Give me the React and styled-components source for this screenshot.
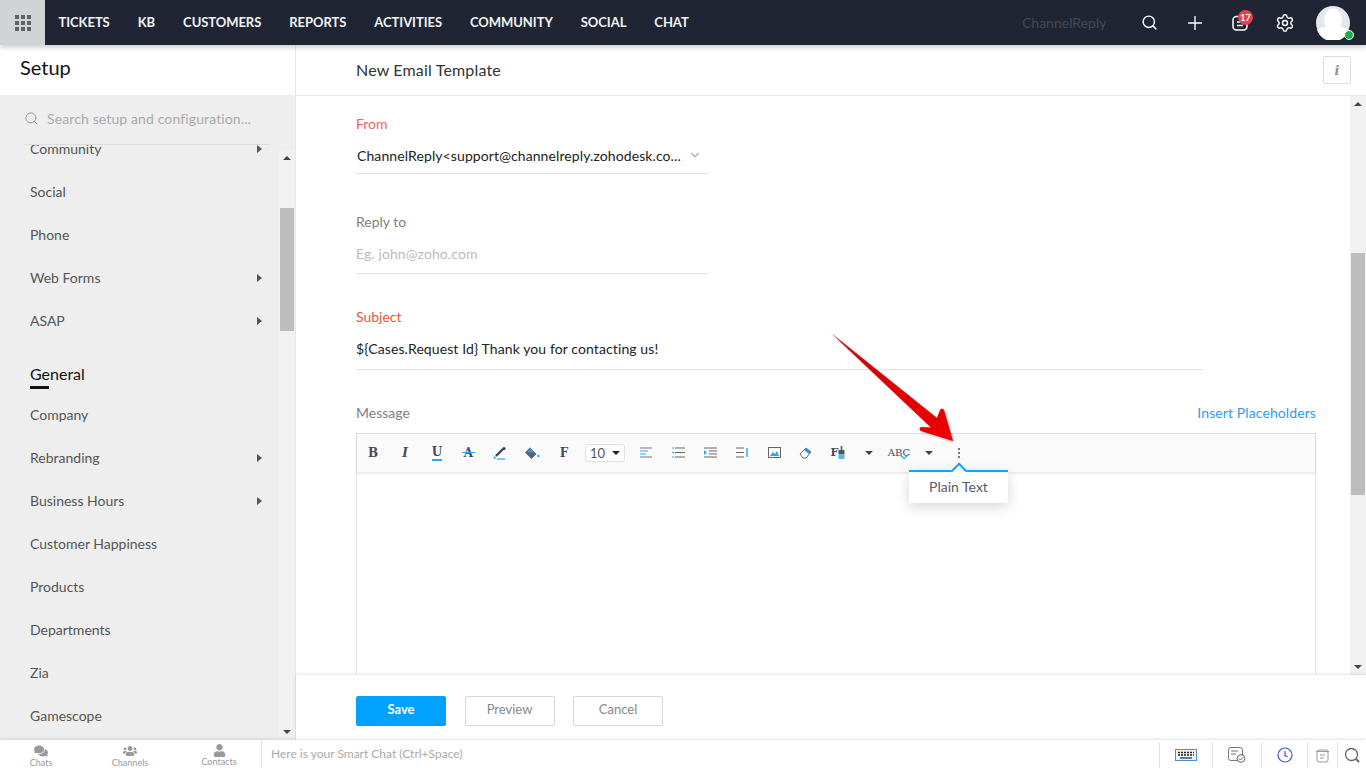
import React from "react";
import styled, { createGlobalStyle } from "styled-components";
import { Search, Plus, Settings, ChevronDown } from "lucide-react";
import { FaComments, FaUsers, FaUser } from "react-icons/fa";

const GlobalStyle = createGlobalStyle`
  html, body { margin: 0; height: 100%; overflow: hidden; }
  body { font-family: Lato, "Liberation Sans", sans-serif; color: #333; background: #fff; }
  * { box-sizing: border-box; }
`;

// top bar
const Page = styled.div`
  display: flex;
  flex-direction: column;
  height: 100vh;
`;

const TopBar = styled.header`
  position: relative;
  z-index: 3;
  flex: none;
  display: flex;
  align-items: center;
  height: 45px;
  background: #1f2533;
  box-shadow: 0 2px 6px rgba(0, 0, 0, 0.22);
`;

const AppsButton = styled.div`
  display: grid;
  grid-template-columns: repeat(3, 4px);
  grid-auto-rows: 4px;
  gap: 2px;
  align-content: center;
  justify-content: center;
  width: 45px;
  height: 45px;
  background: #d1d3d5;
`;

const AppsDot = styled.i`
  background: #5f6368;
`;

const Nav = styled.nav`
  display: flex;
  gap: 28px;
  margin-left: 13.5px;
  padding-bottom: 1px;
`;

const NavItem = styled.span`
  color: #f2f3f5;
  font-size: 13px;
  font-weight: 700;
  letter-spacing: -0.05px;
`;

const Brand = styled.span`
  margin-left: auto;
  width: 105px;
  color: #444a58;
  font-size: 14px;
`;

const TopIcons = styled.div`
  display: flex;
  align-items: center;
  margin-right: 16px;
`;

const TopIcon = styled.div`
  position: relative;
  display: flex;
  align-items: center;
  justify-content: center;
  width: 45px;
  color: #fff;
`;

const Badge = styled.span`
  position: absolute;
  top: -5px;
  left: 21px;
  min-width: 15px;
  height: 15px;
  border-radius: 50%;
  background: #e5414a;
  color: #fff;
  font-size: 9px;
  font-weight: 700;
  line-height: 15px;
  text-align: center;
`;

const Avatar = styled.div`
  position: relative;
  width: 34px;
  height: 34px;
  margin-left: 9px;
`;

const AvatarDot = styled.span`
  position: absolute;
  right: -4px;
  bottom: 0;
  width: 10px;
  height: 10px;
  border-radius: 50%;
  background: #22a94b;
  border: 1px solid #fff;
`;

// sidebar
const Body = styled.div`
  flex: 1;
  min-height: 0;
  display: flex;
`;

const Sidebar = styled.aside`
  flex: none;
  display: flex;
  flex-direction: column;
  width: 296px;
  border-right: 1px solid #e6e6e6;
`;

const SetupHead = styled.div`
  flex: none;
  height: 50px;
  padding: 9px 0 0 20px;
  background: #fff;
  color: #111;
  font-size: 20px;
  line-height: 26px;
`;

const SidePanel = styled.div`
  flex: 1;
  min-height: 0;
  display: flex;
  flex-direction: column;
  background: #eee;
`;

const SearchRow = styled.div`
  flex: none;
  display: flex;
  align-items: center;
  gap: 8px;
  height: 50px;
  margin: 0 25px 0 24px;
  padding-bottom: 2px;
  border-bottom: 1px solid #ddd;
  color: #aaa;
  font-size: 14px;
  letter-spacing: 0.12px;
`;

const SideScrollArea = styled.div`
  flex: 1;
  min-height: 0;
  display: flex;
`;

const SideList = styled.div`
  flex: 1;
  min-width: 0;
  overflow: hidden;
`;

const SideInner = styled.div`
  margin-top: -18.5px;
  padding: 0 17px 0 30px;
`;

const SideItem = styled.div`
  display: flex;
  align-items: center;
  justify-content: space-between;
  height: 43px;
  color: #555;
  font-size: 14px;
`;

const Caret = styled.span`
  width: 0;
  height: 0;
  margin-top: 1px;
  border-left: 5px solid #555;
  border-top: 4px solid transparent;
  border-bottom: 4px solid transparent;
`;

const SideHeading = styled.div`
  position: relative;
  margin-top: 21px;
  height: 30px;
  color: #111;
  font-size: 16px;
  line-height: 22px;
  &::after {
    content: "";
    position: absolute;
    left: 0;
    top: 23px;
    width: 19px;
    height: 3px;
    background: #111;
  }
`;

const ScrollBar = styled.div`
  flex: none;
  display: flex;
  flex-direction: column;
  align-items: center;
  width: 16px;
  margin-top: ${(p) => p.$offset || 0}px;
  background: #f1f1f1;
`;

const ScrollArrow = styled.span`
  flex: none;
  width: 0;
  height: 0;
  margin: ${(p) => (p.$down ? "auto 0 6px" : "6px 0 0")};
  border-left: 4px solid transparent;
  border-right: 4px solid transparent;
  border-${(p) => (p.$down ? "top" : "bottom")}: 4px solid #444;
`;

const ScrollThumb = styled.div`
  flex: none;
  width: 14px;
  height: ${(p) => p.$h}px;
  margin-top: ${(p) => p.$top}px;
  background: #bdbdbd;
`;

// main
const Main = styled.main`
  flex: 1;
  min-width: 0;
  display: flex;
  flex-direction: column;
`;

const MainHead = styled.div`
  flex: none;
  display: flex;
  align-items: center;
  justify-content: space-between;
  height: 51px;
  padding: 0 15px 0 60px;
  border-bottom: 1px solid #e6e6e6;
  color: #333;
  font-size: 16px;
  letter-spacing: 0.17px;
`;

const HeadTitle = styled.span`
  padding-bottom: 2px;
`;

const InfoButton = styled.div`
  display: flex;
  align-items: center;
  justify-content: center;
  width: 28px;
  height: 28px;
  border: 1px solid #ddd;
  border-radius: 2px;
  color: #8a8f98;
  font-family: "DejaVu Serif", serif;
  font-size: 13px;
  font-style: italic;
  font-weight: 700;
`;

const MainScroll = styled.div`
  flex: 1;
  min-height: 0;
  display: flex;
`;

const FormArea = styled.div`
  flex: 1;
  min-width: 0;
  overflow: hidden;
  padding: 18px 34px 0 60px;
`;

const Label = styled.div`
  color: ${(p) => p.$color || "#808080"};
  font-size: 14px;
  line-height: 20px;
`;

const Field = styled.div`
  display: flex;
  align-items: center;
  justify-content: space-between;
  width: ${(p) => p.$w}px;
  height: ${(p) => p.$h}px;
  margin-top: ${(p) => p.$mt}px;
  margin-bottom: ${(p) => p.$mb}px;
  padding: ${(p) => p.$pt || 0}px 6px ${(p) => p.$pb || 0}px ${(p) => p.$pl || 0}px;
  border-bottom: 1px solid #e2e2e2;
  color: ${(p) => (p.$muted ? "#bbb" : "#222")};
  font-size: 14px;
  letter-spacing: 0.1px;
`;

const MessageHead = styled.div`
  display: flex;
  align-items: center;
  justify-content: space-between;
  height: 20px;
  margin-bottom: 10px;
`;

const PlaceholderLink = styled.a`
  padding-bottom: 2px;
  color: #2f9bf0;
  font-size: 14px;
  letter-spacing: 0.1px;
`;

const Editor = styled.div`
  position: relative;
  height: 400px;
  border: 1px solid #e4e4e4;
`;

const Toolbar = styled.div`
  display: flex;
  align-items: center;
  height: 38px;
  padding-bottom: 1px;
  background: #fafafa;
  box-shadow: 0 1px 3px rgba(0, 0, 0, 0.12);
`;

const ToolButton = styled.div`
  position: relative;
  flex: none;
  display: flex;
  align-items: center;
  justify-content: center;
  width: ${(p) => p.$w || 32}px;
  height: 32px;
  color: #4a4a4a;
`;

const Glyph = styled.span`
  position: relative;
  color: #4a4a55;
  font-family: "DejaVu Serif", serif;
  font-size: ${(p) => p.$size || 12}px;
  font-style: ${(p) => (p.$italic ? "italic" : "normal")};
  font-weight: ${(p) => (p.$light ? 400 : 700)};
  line-height: 14px;
  border-bottom: ${(p) => (p.$under ? "2px solid #2fa4f5" : "none")};
`;

const StrikeGlyph = styled(Glyph)`
  &::after {
    content: "";
    position: absolute;
    left: -2px;
    right: -2px;
    top: 6px;
    height: 1px;
    background: #2fa4f5;
  }
`;

const CheckMark = styled.svg`
  position: absolute;
  right: 4px;
  top: 16px;
`;

const SizeSelect = styled.div`
  flex: none;
  display: flex;
  align-items: center;
  justify-content: space-between;
  width: 40px;
  height: 18px;
  margin: 0 5px;
  padding: 0 4px;
  border: 1px solid #e2e2e2;
  border-radius: 3px;
  background: #fff;
  color: #555;
  font-size: 13px;
`;

const SmallCaret = styled.span`
  width: 0;
  height: 0;
  border-left: 4px solid transparent;
  border-right: 4px solid transparent;
  border-top: 4px solid #222;
`;

const GreyCaret = styled(SmallCaret)`
  border-top-color: #444;
`;

const Dots = styled.div`
  display: grid;
  gap: 2px;
`;

const Dot = styled.i`
  width: 2px;
  height: 2px;
  background: #777;
`;

const Popup = styled.div`
  position: absolute;
  left: 552px;
  top: 36px;
  width: 99px;
  height: 33px;
  border-top: 2px solid #0aa5ff;
  background: #fff;
  box-shadow: 0 4px 14px rgba(0, 0, 0, 0.16);
  color: #5a5a66;
  font-size: 14px;
  line-height: 30px;
  text-align: center;
  &::before {
    content: "";
    position: absolute;
    left: 44px;
    top: -7px;
    width: 10px;
    height: 10px;
    transform: rotate(45deg);
    border-left: 2px solid #0aa5ff;
    border-top: 2px solid #0aa5ff;
    background: #fff;
  }
`;

const ArrowMark = styled.svg`
  position: absolute;
  left: 474px;
  top: -101px;
  overflow: visible;
  filter: drop-shadow(1px 1px 1px rgba(0, 0, 0, 0.35));
`;

const MainFoot = styled.div`
  position: relative;
  flex: none;
  display: flex;
  align-items: center;
  gap: 18.5px;
  height: 65px;
  padding: 7px 0 0 60px;
  background: #fff;
  box-shadow: 0 -1px 3px rgba(0, 0, 0, 0.1);
`;

const FootButton = styled.button`
  width: 90px;
  height: 30px;
  padding: 0 0 5px;
  border: 1px solid ${(p) => (p.$primary ? "#00a2ff" : "#d8d8d8")};
  border-radius: 2px;
  background: ${(p) => (p.$primary ? "#00a2ff" : "#fff")};
  color: ${(p) => (p.$primary ? "#fff" : "#888")};
  font-family: inherit;
  font-size: 13px;
  font-weight: ${(p) => (p.$primary ? 700 : 400)};
`;

// bottom bar
const BottomBar = styled.footer`
  position: relative;
  z-index: 2;
  flex: none;
  display: flex;
  align-items: stretch;
  height: 28px;
  background: #fff;
  box-shadow: 0 -1px 3px rgba(0, 0, 0, 0.12);
`;

const ChatTabs = styled.div`
  flex: none;
  display: flex;
  width: 262px;
  overflow: hidden;
  border-right: 1px solid #e4e4e4;
`;

const ChatTab = styled.div`
  flex: none;
  display: flex;
  flex-direction: column;
  align-items: center;
  width: 89px;
  padding-top: 4px;
  color: #999;
  font-size: 9px;
  line-height: 9px;
  &:first-child {
    margin-left: -3.5px;
  }
`;

const SmartChat = styled.div`
  flex: 1;
  padding-left: 9px;
  color: #aaa;
  font-size: 12px;
  line-height: 27px;
`;

const TrayCell = styled.div`
  flex: none;
  display: flex;
  align-items: center;
  justify-content: center;
  width: ${(p) => p.$w}px;
  margin: 2px 0 0;
  border-left: 1px solid #e4e4e4;
`;

const MENU = [
  { name: "Community", more: true },
  { name: "Social" },
  { name: "Phone" },
  { name: "Web Forms", more: true },
  { name: "ASAP", more: true },
  { heading: "General" },
  { name: "Company" },
  { name: "Rebranding", more: true },
  { name: "Business Hours", more: true },
  { name: "Customer Happiness" },
  { name: "Products" },
  { name: "Departments" },
  { name: "Zia" },
  { name: "Gamescope" },
];

const NAV = ["Tickets", "KB", "Customers", "Reports", "Activities", "Community", "Social", "Chat"];

const Svg = ({ w = 16, h = 16, children }) => (
  <svg width={w} height={h} viewBox={`0 0 ${w} ${h}`} fill="none">
    {children}
  </svg>
);

const App = () => (
  <Page>
    <GlobalStyle />
    <TopBar>
      <AppsButton>
        {Array.from({ length: 9 }).map((_, i) => (
          <AppsDot key={i} />
        ))}
      </AppsButton>
      <Nav>
        {NAV.map((n) => (
          <NavItem key={n}>{n.toUpperCase()}</NavItem>
        ))}
      </Nav>
      <Brand>ChannelReply</Brand>
      <TopIcons>
        <TopIcon>
          <Search size={17} strokeWidth={2} />
        </TopIcon>
        <TopIcon>
          <Plus size={22} strokeWidth={1.5} />
        </TopIcon>
        <TopIcon>
          <Svg w={16} h={16}>
            <rect x="1" y="1.5" width="14" height="13.5" rx="3.5" stroke="#fff" strokeWidth="1.5" />
            <path d="M5 7h6M5 10.5h6" stroke="#fff" strokeWidth="1.5" />
          </Svg>
          <Badge>17</Badge>
        </TopIcon>
        <TopIcon>
          <Settings size={20} strokeWidth={1.7} />
        </TopIcon>
        <Avatar>
          <svg width="34" height="34" viewBox="0 0 34 34">
            <circle cx="17" cy="17" r="17" fill="#e4e7ef" />
            <ellipse cx="17" cy="14" rx="9" ry="11.5" fill="#fff" />
            <path d="M1 24c4-3 10-4 16-4s12 1 16 4a17 17 0 0 1-32 0z" fill="#fff" />
          </svg>
          <AvatarDot />
        </Avatar>
      </TopIcons>
    </TopBar>

    <Body>
      <Sidebar>
        <SetupHead>Setup</SetupHead>
        <SidePanel>
          <SearchRow>
            <Search size={15} color="#999" strokeWidth={1.6} />
            Search setup and configuration...
          </SearchRow>
          <SideScrollArea>
            <SideList>
              <SideInner>
                {MENU.map((m) =>
                  m.heading ? (
                    <SideHeading key={m.heading}>{m.heading}</SideHeading>
                  ) : (
                    <SideItem key={m.name}>
                      {m.name}
                      {m.more && <Caret />}
                    </SideItem>
                  )
                )}
              </SideInner>
            </SideList>
            <ScrollBar $offset={5}>
              <ScrollArrow />
              <ScrollThumb $top={48} $h={123} />
              <ScrollArrow $down />
            </ScrollBar>
          </SideScrollArea>
        </SidePanel>
      </Sidebar>

      <Main>
        <MainHead>
          <HeadTitle>New Email Template</HeadTitle>
          <InfoButton>i</InfoButton>
        </MainHead>
        <MainScroll>
          <FormArea>
            <Label $color="#f4605f">From</Label>
            <Field $w={352} $h={39} $mt={1} $mb={38} $pl={1} $pt={2}>
              ChannelReply&lt;support@channelreply.zohodesk.co...
              <ChevronDown size={14} color="#aaa" />
            </Field>
            <Label>Reply to</Label>
            <Field $w={353} $h={40} $mt={2} $mb={33} $muted>
              Eg. john@zoho.com
            </Field>
            <Label $color="#e4573d">Subject</Label>
            <Field $w={847} $h={41} $mt={2} $mb={33} $pb={2}>
              {"${Cases.Request Id} Thank you for contacting us!"}
            </Field>
            <MessageHead>
              <Label>Message</Label>
              <PlaceholderLink>Insert Placeholders</PlaceholderLink>
            </MessageHead>
            <Editor>
              <Toolbar>
                <ToolButton><Glyph>B</Glyph></ToolButton>
                <ToolButton><Glyph $italic>I</Glyph></ToolButton>
                <ToolButton><Glyph $under>U</Glyph></ToolButton>
                <ToolButton $w={31}><StrikeGlyph>A</StrikeGlyph></ToolButton>
                <ToolButton>
                  <Svg w={14} h={14}>
                    <path d="M3 10 10 3" stroke="#3a4a55" strokeWidth="2.4" />
                    <circle cx="11" cy="2.5" r="1.6" fill="#3a3a44" />
                    <path d="M4 13h8" stroke="#2fa4f5" strokeWidth="1.2" />
                    <path d="M2 10.5 1.5 13" stroke="#2fa4f5" strokeWidth="1.6" />
                  </Svg>
                </ToolButton>
                <ToolButton>
                  <Svg w={16} h={14}>
                    <path d="M1 6.5 6 1.5l6.5 6.5-5 5z" fill="#5a6470" />
                    <path d="M3 6 6.5 3l3.5 3.5z" fill="#2fa4f5" />
                    <circle cx="14.5" cy="10" r="1.2" fill="#2fa4f5" />
                  </Svg>
                </ToolButton>
                <ToolButton><Glyph>F</Glyph></ToolButton>
                <SizeSelect>
                  10
                  <SmallCaret />
                </SizeSelect>
                <ToolButton>
                  <Svg w={13} h={11}>
                    <path d="M0 1h12M0 10h12" stroke="#777" />
                    <path d="M0 4h8M0 7h6" stroke="#2fa4f5" />
                  </Svg>
                </ToolButton>
                <ToolButton>
                  <Svg w={13} h={11}>
                    <path d="M3 1h10M3 5.5h10M3 10h10" stroke="#666" />
                    <path d="M0 1h2M0 5.5h2M0 10h2" stroke="#2fa4f5" />
                  </Svg>
                </ToolButton>
                <ToolButton>
                  <Svg w={13} h={11}>
                    <path d="M0 1h13M5 4h8M5 7h8M0 10h13" stroke="#666" />
                    <path d="M0 3l3 2.5L0 8z" fill="#2fa4f5" />
                  </Svg>
                </ToolButton>
                <ToolButton>
                  <Svg w={13} h={11}>
                    <path d="M0 1h8M0 5.5h8M0 10h8" stroke="#666" />
                    <path d="M11 1v9" stroke="#2fa4f5" strokeWidth="1.4" />
                  </Svg>
                </ToolButton>
                <ToolButton>
                  <Svg w={13} h={11}>
                    <rect x="0.5" y="0.5" width="12" height="10" stroke="#666" />
                    <path d="M2 9l3-4 2 2 2-3 2 5z" fill="#2fa4f5" />
                  </Svg>
                </ToolButton>
                <ToolButton>
                  <Svg w={14} h={13}>
                    <path d="M1 8l6-6 5 4-5 6H4z" stroke="#666" fill="#fff" />
                    <path d="M5 4l2-2 5 4-2 2z" fill="#2f8fe0" />
                  </Svg>
                </ToolButton>
                <ToolButton>
                  <Glyph $size={11}>F</Glyph>
                  <Svg w={7} h={14}>
                    <path d="M3.5 0v4" stroke="#555" strokeWidth="1.6" />
                    <rect x="0.5" y="4" width="6" height="4" fill="#555" />
                    <rect x="0.5" y="8" width="6" height="5" fill="#5fb4f0" />
                  </Svg>
                </ToolButton>
                <ToolButton $w={30}><GreyCaret /></ToolButton>
                <ToolButton $w={30}>
                  <Glyph $size={10} $light>ABC</Glyph>
                  <CheckMark width="10" height="7" viewBox="0 0 10 7" fill="none">
                    <path d="M1 2.5 4 5.5 9 1" stroke="#2fa4f5" strokeWidth="1.2" />
                  </CheckMark>
                </ToolButton>
                <ToolButton $w={30}><GreyCaret /></ToolButton>
                <ToolButton $w={29}>
                  <Dots>
                    <Dot />
                    <Dot />
                    <Dot />
                  </Dots>
                </ToolButton>
              </Toolbar>
              <Popup>Plain Text</Popup>
              <ArrowMark width="130" height="112" viewBox="0 0 130 112">
                <defs>
                  <linearGradient id="arrowRed" x1="0" y1="0" x2="1" y2="1">
                    <stop offset="0" stopColor="#c8000a" />
                    <stop offset="1" stopColor="#ee0000" />
                  </linearGradient>
                </defs>
                <path
                  d="M0 0 106 85 109 77Q111 74 113 77L122 108 90 98Q87 96 90 94L100 94.5Z"
                  fill="url(#arrowRed)"
                />
              </ArrowMark>
            </Editor>
          </FormArea>
          <ScrollBar>
            <ScrollArrow />
            <ScrollThumb $top={147} $h={242} />
            <ScrollArrow $down />
          </ScrollBar>
        </MainScroll>
        <MainFoot>
          <FootButton $primary>Save</FootButton>
          <FootButton>Preview</FootButton>
          <FootButton>Cancel</FootButton>
        </MainFoot>
      </Main>
    </Body>

    <BottomBar>
      <ChatTabs>
        <ChatTab><FaComments size={14} />Chats</ChatTab>
        <ChatTab><FaUsers size={14} />Channels</ChatTab>
        <ChatTab><FaUser size={13} />Contacts</ChatTab>
      </ChatTabs>
      <SmartChat>Here is your Smart Chat (Ctrl+Space)</SmartChat>
      <TrayCell $w={53}>
        <Svg w={22} h={12}>
          <rect x="0.5" y="0.5" width="21" height="11" fill="#f4f4f4" stroke="#4a90d0" />
          <path d="M3 3.5h16M3 6h16" stroke="#222" strokeWidth="1.4" strokeDasharray="2 1" />
          <path d="M5 9h12" stroke="#222" strokeWidth="1.2" />
        </Svg>
      </TrayCell>
      <TrayCell $w={49}>
        <Svg w={18} h={16}>
          <rect x="0.5" y="0.5" width="14" height="13" rx="2.5" stroke="#777" />
          <path d="M3 4h7M3 7h5" stroke="#777" />
          <circle cx="13" cy="11.5" r="3.8" fill="#fff" stroke="#666" />
          <path d="M11 11.5l1.5 1.5 2.5-2.5" stroke="#666" />
        </Svg>
      </TrayCell>
      <TrayCell $w={46}>
        <Svg w={16} h={16}>
          <circle cx="8" cy="8" r="7" stroke="#3a5fc0" strokeWidth="1.2" />
          <path d="M8 4v4.5l2.5 1.5" stroke="#7a2a90" strokeWidth="1.1" />
        </Svg>
      </TrayCell>
      <TrayCell $w={30}>
        <Svg w={15} h={15}>
          <rect x="2" y="2" width="11" height="12" rx="2" fill="#fff" stroke="#999" />
          <path d="M1 3.5h13M5 7h5M5 10h4" stroke="#999" />
        </Svg>
      </TrayCell>
      <TrayCell $w={29}>
        <Svg w={17} h={17}>
          <circle cx="7.5" cy="7.5" r="6" stroke="#666" strokeWidth="1.3" />
          <path d="M12 12l3 3" stroke="#666" strokeWidth="2" />
        </Svg>
      </TrayCell>
    </BottomBar>
  </Page>
);

export default App;
